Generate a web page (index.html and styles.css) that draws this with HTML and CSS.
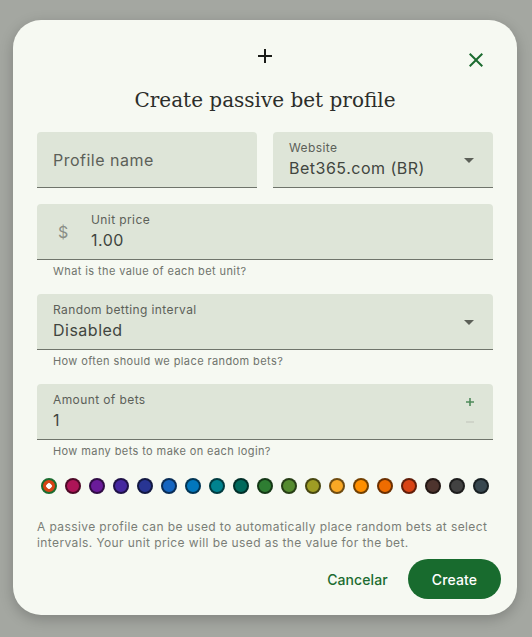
FILE: index.html
```html
<!DOCTYPE html>
<html lang="en">
<head>
    <meta charset="UTF-8">
    <meta name="viewport" content="width=device-width, initial-scale=1.0">
    <title>Create passive bet profile</title>
    <link rel="stylesheet" href="styles.css">
</head>
<body>
    <div class="dialog">
        <button class="close-btn" aria-label="Close">
            <svg viewBox="0 0 24 24" width="24" height="24"><path d="M19 6.41L17.59 5 12 10.59 6.41 5 5 6.41 10.59 12 5 17.59 6.41 19 12 13.41 17.59 19 19 17.59 13.41 12z"/></svg>
        </button>
        <div class="dialog-icon">
            <svg viewBox="0 0 24 24" width="24" height="24"><path d="M19 13h-6v6h-2v-6H5v-2h6V5h2v6h6v2z"/></svg>
        </div>
        <h1 class="dialog-title">Create passive bet profile</h1>

        <div class="form">
            <div class="row">
                <div class="field">
                    <span class="placeholder">Profile name</span>
                </div>
                <div class="field">
                    <div class="field-body">
                        <span class="label">Website</span>
                        <span class="value">Bet365.com (BR)</span>
                    </div>
                    <span class="arrow"><svg viewBox="0 0 24 24" width="24" height="24"><path d="M7 10l5 5 5-5z"/></svg></span>
                </div>
            </div>

            <div class="group">
                <div class="field">
                    <span class="prefix">$</span>
                    <div class="field-body">
                        <span class="label">Unit price</span>
                        <span class="value">1.00</span>
                    </div>
                </div>
                <p class="helper">What is the value of each bet unit?</p>
            </div>

            <div class="group">
                <div class="field">
                    <div class="field-body">
                        <span class="label">Random betting interval</span>
                        <span class="value">Disabled</span>
                    </div>
                    <span class="arrow"><svg viewBox="0 0 24 24" width="24" height="24"><path d="M7 10l5 5 5-5z"/></svg></span>
                </div>
                <p class="helper">How often should we place random bets?</p>
            </div>

            <div class="group">
                <div class="field">
                    <div class="field-body">
                        <span class="label">Amount of bets</span>
                        <span class="value">1</span>
                    </div>
                    <div class="stepper">
                        <svg class="step-up" viewBox="0 0 10 10" width="10" height="10"><path d="M4.2 1h1.6v3.2H9v1.6H5.8V9H4.2V5.8H1V4.2h3.2z"/></svg>
                        <svg class="step-down" viewBox="0 0 10 10" width="10" height="10"><path d="M1 4.2h8v1.6H1z"/></svg>
                    </div>
                </div>
                <p class="helper">How many bets to make on each login?</p>
            </div>
        </div>

        <div class="swatches">
            <span class="swatch selected"></span>
            <span class="swatch c-pink"></span>
            <span class="swatch c-purple"></span>
            <span class="swatch c-deep-purple"></span>
            <span class="swatch c-indigo"></span>
            <span class="swatch c-blue"></span>
            <span class="swatch c-light-blue"></span>
            <span class="swatch c-cyan"></span>
            <span class="swatch c-teal"></span>
            <span class="swatch c-green"></span>
            <span class="swatch c-light-green"></span>
            <span class="swatch c-lime"></span>
            <span class="swatch c-yellow"></span>
            <span class="swatch c-amber"></span>
            <span class="swatch c-orange"></span>
            <span class="swatch c-deep-orange"></span>
            <span class="swatch c-brown"></span>
            <span class="swatch c-grey"></span>
            <span class="swatch c-blue-grey"></span>
        </div>

        <p class="note">A passive profile can be used to automatically place random bets at select intervals. Your unit price will be used as the value for the bet.</p>

        <div class="actions">
            <button class="btn-text">Cancelar</button>
            <button class="btn-filled">Create</button>
        </div>
    </div>
</body>
</html>
```

FILE: styles.css
```css
*{
    margin: 0;
    padding: 0;
    box-sizing: border-box;
}
body {
    font-family: Inter, 'Noto Sans', sans-serif;
    background-color: #a4a7a1;
    width: 100vw;
    height: 100vh;
    overflow: hidden;
}
.dialog {
    position: relative;
    width: 504px;
    margin: 20px 0 0 13px;
    background-color: #f6f9f2;
    border-radius: 28px;
    padding: 24px 16px 16px 24px;
    box-shadow: 0 4px 14px rgba(0, 0, 0, 0.22);
}
.close-btn {
    position: absolute;
    top: 20px;
    right: 21px;
    width: 40px;
    height: 40px;
    border: none;
    background: none;
    display: flex;
    align-items: center;
    justify-content: center;
}
.close-btn svg {
    fill: #1c6c30;
}
.dialog-icon {
    display: flex;
    justify-content: center;
    padding-right: 8px;
}
.dialog-icon svg {
    fill: #1a1c18;
}
.dialog-title {
    font-family: 'DejaVu Serif', serif;
    font-weight: normal;
    font-size: 20px;
    line-height: 32px;
    color: #2c2e2a;
    text-align: center;
    padding-right: 8px;
    margin-top: 16px;
}

.form {
    margin-top: 16px;
    padding-right: 8px;
    display: flex;
    flex-direction: column;
    gap: 15px;
}
.row {
    display: flex;
    gap: 16px;
    margin-bottom: 1px;
}
.row .field {
    flex: 1;
}
.field {
    height: 56px;
    background-color: #dee5d8;
    border-radius: 4px 4px 0 0;
    border-bottom: 1px solid #6f746b;
    display: flex;
    align-items: center;
    padding: 0 12px 0 16px;
}
.field-body {
    flex: 1;
    display: flex;
    flex-direction: column;
    padding-top: 1px;
}
.placeholder {
    font-size: 16px;
    letter-spacing: 0.5px;
    color: #5c6058;
}
.label {
    font-size: 12px;
    line-height: 16px;
    letter-spacing: 0.4px;
    color: #5c6058;
}
.value {
    font-size: 16px;
    line-height: 24px;
    letter-spacing: 0.5px;
    color: #41453f;
}
.prefix {
    width: 38px;
    padding-left: 5px;
    font-size: 16px;
    color: #8a8e86;
}
.arrow {
    display: flex;
}
.arrow svg {
    fill: #5c6058;
}
.stepper {
    display: flex;
    flex-direction: column;
    align-items: center;
    gap: 10px;
    padding-right: 6px;
}
.step-up {
    fill: #4f8a5b;
}
.step-down {
    fill: #cbd0c6;
}
.helper {
    font-size: 11px;
    line-height: 16px;
    letter-spacing: 0.4px;
    color: #6f736c;
    padding: 3px 0 0 16px;
}

.swatches {
    display: flex;
    justify-content: space-between;
    padding: 0 4px;
    margin: 19px 8px 0 0;
}
.swatch {
    width: 16px;
    height: 16px;
    border-radius: 50%;
    border: 2px solid rgba(0, 0, 0, 0.55);
}
.swatch.selected {
    background-color: #d84315;
    border-color: #1c6c30;
    background-image: radial-gradient(circle, #fff 0 2.5px, transparent 3px);
}
.c-pink { background-color: #ad1457; }
.c-purple { background-color: #6a1b9a; }
.c-deep-purple { background-color: #4527a0; }
.c-indigo { background-color: #283593; }
.c-blue { background-color: #1565c0; }
.c-light-blue { background-color: #0277bd; }
.c-cyan { background-color: #00838f; }
.c-teal { background-color: #00695c; }
.c-green { background-color: #2e7d32; }
.c-light-green { background-color: #558b2f; }
.c-lime { background-color: #9e9d24; }
.c-yellow { background-color: #f9a825; }
.c-amber { background-color: #ff8f00; }
.c-orange { background-color: #ef6c00; }
.c-deep-orange { background-color: #d84315; }
.c-brown { background-color: #4e342e; }
.c-grey { background-color: #424242; }
.c-blue-grey { background-color: #37474f; }

.note {
    margin-top: 25px;
    padding-right: 8px;
    font-size: 12px;
    line-height: 16px;
    letter-spacing: 0.4px;
    color: #7a7e77;
}
.actions {
    margin-top: 8px;
    display: flex;
    justify-content: flex-end;
    gap: 8px;
}
.actions button {
    font-family: Inter, 'Noto Sans', sans-serif;
    font-size: 14px;
    font-weight: 500;
    letter-spacing: 0.1px;
    height: 40px;
    border: none;
    border-radius: 20px;
}
.btn-text {
    background: none;
    color: #1c6c30;
    padding: 0 12px;
}
.btn-filled {
    background-color: #186b2e;
    color: #fff;
    padding: 0 24px;
}
```
